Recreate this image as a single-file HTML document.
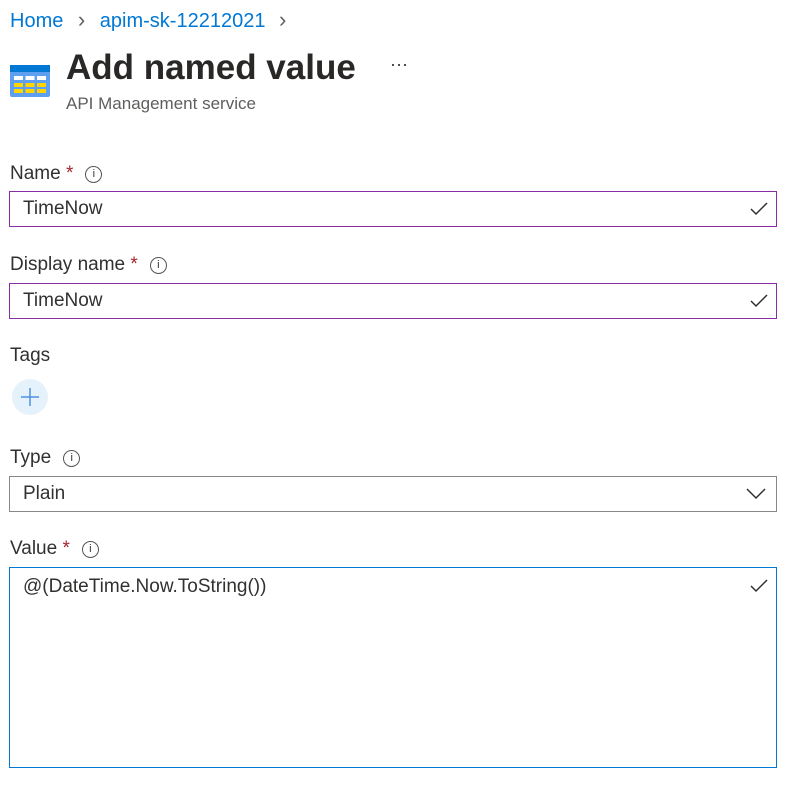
<!DOCTYPE html><html><head><style>
body{margin:0;background:#fff;font-family:"Liberation Sans",sans-serif;color:#323130;width:807px;height:810px;position:relative;overflow:hidden}
.a{position:absolute}
.lbl{font-size:19px;}
.req{color:#a4262c}
.info{display:inline-block;width:15px;height:15px;border:1px solid #555;border-radius:50%;font-size:11px;text-align:center;line-height:15px;vertical-align:2px;margin-left:12px}
.box{position:absolute;left:9px;width:766px;border:1px solid #8a2da5;font-size:19px;box-sizing:content-box}
.chk{position:absolute;right:8px}
</style></head><body>
<div class="a" style="left:10px;top:7px;font-size:20px;color:#0078d4">Home <span style="color:#605e5c;margin:0 9px;font-size:22px">&#8250;</span> apim-sk-12212021 <span style="color:#605e5c;margin-left:8px;font-size:22px">&#8250;</span></div>
<svg class="a" style="left:10px;top:65px" width="40" height="32"><rect width="40" height="32" rx="2" fill="#5ea0ef"/><rect width="40" height="7" fill="#0078d4"/>
<g fill="#fff"><rect x="4" y="11" width="9" height="4"/><rect x="15.5" y="11" width="9" height="4"/><rect x="27" y="11" width="9" height="4"/></g>
<g fill="#ffd400"><rect x="4" y="18" width="9" height="4"/><rect x="15.5" y="18" width="9" height="4"/><rect x="27" y="18" width="9" height="4"/><rect x="4" y="24" width="9" height="4"/><rect x="15.5" y="24" width="9" height="4"/><rect x="27" y="24" width="9" height="4"/></g></svg>
<div class="a" style="left:66px;top:48px;font-size:35px;font-weight:bold;color:#292827">Add named value</div>
<div class="a" style="left:390px;top:54px;font-size:18px">&middot;&middot;&middot;</div>
<div class="a" style="left:66px;top:94px;font-size:17px;color:#605e5c">API Management service</div>

<div class="a lbl" style="left:10px;top:163px">Name <span class="req">*</span><span class="info">i</span></div>
<div class="box" style="top:191px;height:34px;line-height:34px"><span style="margin-left:13px">TimeNow</span><svg class="chk" style="top:10px" width="18" height="14"><path d="M1 7l5 5L17 1" stroke="#323130" stroke-width="1.5" fill="none"/></svg></div>
<div class="a lbl" style="left:10px;top:254px">Display name <span class="req">*</span><span class="info">i</span></div>
<div class="box" style="top:283px;height:34px;line-height:34px"><span style="margin-left:13px">TimeNow</span><svg class="chk" style="top:10px" width="18" height="14"><path d="M1 7l5 5L17 1" stroke="#323130" stroke-width="1.5" fill="none"/></svg></div>
<div class="a lbl" style="left:10px;top:345px">Tags</div>
<svg class="a" style="left:12px;top:379px" width="36" height="36"><circle cx="18" cy="18" r="18" fill="#e5f1fb"/><path d="M18 9v18M9 18h18" stroke="#4f8fe0" stroke-width="1.5"/></svg>
<div class="a lbl" style="left:10px;top:447px">Type<span class="info">i</span></div>
<div class="box" style="top:476px;height:34px;line-height:34px;border-color:#8a8886"><span style="margin-left:13px">Plain</span><svg class="chk" style="top:11px;right:10px" width="20" height="12"><path d="M1 1l9 9 9-9" stroke="#323130" stroke-width="1.5" fill="none"/></svg></div>
<div class="a lbl" style="left:10px;top:538px">Value <span class="req">*</span><span class="info">i</span></div>
<div class="box" style="top:567px;height:199px;border-color:#0078d4"><span style="position:absolute;left:13px;top:8px">@(DateTime.Now.ToString())</span><svg class="chk" style="top:11px" width="18" height="14"><path d="M1 7l5 5L17 1" stroke="#323130" stroke-width="1.5" fill="none"/></svg></div>
</body></html>
